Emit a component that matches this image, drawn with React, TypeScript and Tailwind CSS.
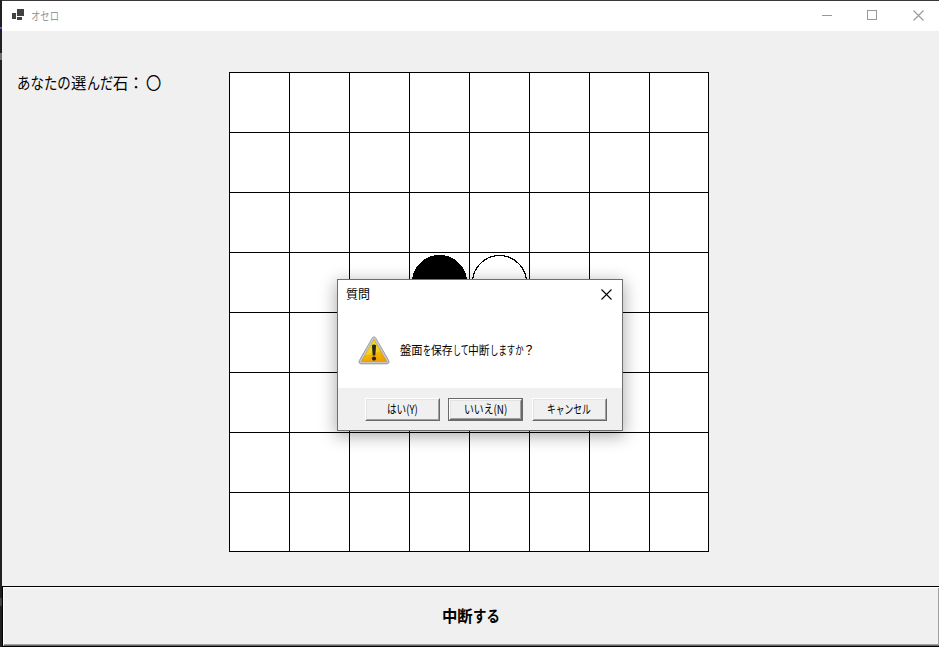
import React from "react";

type Disc = "black" | "white" | null;

const discs: Record<number, Disc> = { 27: "black", 28: "white", 35: "white", 36: "black" };

function Text({ children, width, stretch, className = "" }: { children: React.ReactNode; width: string; stretch: string; className?: string }) {
  return (
    <span className={`inline-block whitespace-pre ${width} ${className}`}>
      <span className={`inline-block origin-left ${stretch}`}>{children}</span>
    </span>
  );
}

function Cross({ className }: { className: string }) {
  return (
    <svg viewBox="0 0 11 11" className={`h-[11px] w-[11px] ${className}`} fill="none" stroke="currentColor">
      <path d="M.5.5l10 10M10.5.5l-10 10" strokeWidth="1.1" />
    </svg>
  );
}

function TitleBar() {
  return (
    <header className="flex h-[30px] items-center bg-white pl-[10px] text-[#999]">
      <svg viewBox="0 0 12 12" className="h-3 w-3 -translate-y-px" fill="#424242" shapeRendering="crispEdges">
        <path d="M5 0h7v7H5zM0 4h4v6H0zM5 8h5v3H5z" />
      </svg>
      <Text width="w-[28px]" stretch="scale-x-[0.78]" className="ml-[7px] text-[12px] leading-[30px]">オセロ</Text>
      <div className="mb-[2px] ml-auto flex items-center pr-[15px]">
        <div className="h-px w-[10px] bg-[#999]" />
        <div className="ml-[35px] h-[10px] w-[10px] border border-[#999]" />
        <Cross className="ml-[36px] text-[#999]" />
      </div>
    </header>
  );
}

function Board() {
  return (
    <div className="grid h-[480px] w-[480px] shrink-0 grid-cols-[repeat(7,60px)_58px] grid-rows-[repeat(7,60px)_58px] border border-black bg-white">
      {Array.from({ length: 64 }, (_, i) => (
        <div key={i} className={`pl-[2px] pt-[2px] ${i % 8 < 7 ? "border-r border-black" : ""} ${i < 56 ? "border-b border-black" : ""}`}>
          {discs[i] && (
            <svg viewBox="0 0 55 55" className="h-[55px] w-[55px]" shapeRendering="crispEdges">
              <circle cx="27.5" cy="27.5" r="27" fill={discs[i] as string} stroke="black" strokeWidth="1.2" />
            </svg>
          )}
        </div>
      ))}
    </div>
  );
}

function DialogButton({ children, focused = false }: { children: React.ReactNode; focused?: boolean }) {
  return (
    <button className={`block h-[23px] w-[75px] bg-[#f0f0f0] ${focused ? "border border-[#696969]" : ""}`}>
      <span className="flex h-full items-center justify-center border border-b-[#696969] border-l-white border-r-[#696969] border-t-white">
        <span className="flex h-full w-full items-center justify-center border border-b-[#a0a0a0] border-l-[#e3e3e3] border-r-[#a0a0a0] border-t-[#e3e3e3] pb-[2px] text-[12px] leading-none">
          {children}
        </span>
      </span>
    </button>
  );
}

function Warning() {
  return (
    <svg viewBox="0 0 32 29" className="h-[29px] w-8">
      <defs>
        <linearGradient id="rim" x2="0" y2="1"><stop stopColor="#a8a8a8" /><stop offset="1" stopColor="#8f9295" /></linearGradient>
        <linearGradient id="gold" x2="0.3" y2="1"><stop stopColor="#e0da00" /><stop offset=".5" stopColor="#f0ca00" /><stop offset="1" stopColor="#f2a200" /></linearGradient>
        <linearGradient id="shine" x2="1" y2="1"><stop stopColor="#fff34a" /><stop offset="1" stopColor="#ffd83b" /></linearGradient>
      </defs>
      <path d="M14.2 1.9Q16-.5 17.8 1.9L30.7 24.7Q31.8 27.7 28.7 27.8H3.3Q.2 27.7 1.3 24.7Z" fill="#c6c8c9" stroke="url(#rim)" strokeWidth="1" />
      <path d="M16 3.7L28.7 25.6H3.3Z" fill="url(#gold)" stroke="#c79608" strokeWidth=".6" />
      <path d="M16 4.5L22 15Q15 19 7 19Z" fill="url(#shine)" opacity=".45" />
      <path d="M13.9 9.2Q16 7.8 18.1 9.2L17.3 19.4H14.7Z" fill="#252522" />
      <circle cx="16" cy="22.6" r="2.1" fill="#252522" />
    </svg>
  );
}

function Dialog() {
  return (
    <section className="absolute left-[337px] top-[279px] flex h-[152px] w-[286px] flex-col border border-[#6e6e6e] bg-white shadow-[0_4px_16px_1px_rgba(0,0,0,0.33)]">
      <div className="flex h-[29px] items-center justify-between pl-2 pr-[10px]">
        <Text width="w-[26px]" stretch="scale-x-100" className="-mt-[2px] text-[12px] leading-none">質問</Text>
        <Cross className="-mt-px text-black" />
      </div>
      <div className="flex h-[79px] items-start pl-[20px] pt-[27px]">
        <Warning />
        <div className="ml-[10px] mt-[8px] flex text-[12px] leading-none">
          <Text width="w-[23px]" stretch="scale-x-[0.94]">盤面</Text>
          <Text width="w-[8px]" stretch="scale-x-[0.68]">を</Text>
          <Text width="w-[22px]" stretch="scale-x-[0.9]">保存</Text>
          <Text width="w-[15px]" stretch="scale-x-[0.66]">して</Text>
          <Text width="w-[22px]" stretch="scale-x-[0.9]">中断</Text>
          <Text width="w-[33px]" stretch="scale-x-[0.7]">しますか</Text>
          <Text width="w-[12px]" stretch="scale-x-100">？</Text>
        </div>
      </div>
      <footer className="flex flex-1 bg-[#f0f0f0] pl-[27px] pt-[10px]">
        <DialogButton><Text width="w-[31px]" stretch="scale-x-[0.8]">はい(Y)</Text></DialogButton>
        <div className="ml-2"><DialogButton focused><Text width="w-[43px]" stretch="scale-x-[0.82]">いいえ(N)</Text></DialogButton></div>
        <div className="ml-[9px]"><DialogButton><Text width="w-[45px]" stretch="scale-x-[0.73]">キャンセル</Text></DialogButton></div>
      </footer>
    </section>
  );
}

export default function App() {
  return (
    <div className="relative flex h-[647px] w-[939px] overflow-hidden bg-[#202022] pt-px font-['Noto_Sans_CJK_JP',sans-serif] text-black">
      <div className="flex w-[2px] shrink-0 flex-col">
        <div className="mt-[26px] h-[2px] bg-[#6548dc]" />
        <div className="mt-[24px] h-[7px] bg-[#776d61]" />
        <div className="mt-[538px] h-[8px] bg-[#444]" />
      </div>
      <div className="-mt-px flex min-w-0 flex-1 flex-col border-t border-[#38383a]">
        <TitleBar />
        <main className="flex h-[555px] bg-[#f0f0f0] pt-[41px]">
          <div className="-mt-px flex h-[22px] w-[227px] shrink-0 pl-[15px] text-[16px] leading-[22px]">
            <Text width="w-[54px]" stretch="scale-x-[0.84]">あなたの</Text>
            <Text width="w-[16px]" stretch="scale-x-[0.96]">選</Text>
            <Text width="w-[26px]" stretch="scale-x-[0.82]">んだ</Text>
            <Text width="w-[15px]" stretch="scale-x-[0.95]">石</Text>
            <Text width="w-[18px]" stretch="scale-x-100">：</Text>
            <Text width="w-[16px]" stretch="scale-x-[0.95]">〇</Text>
          </div>
          <Board />
        </main>
        <button className="h-[61px] border-b border-l border-t border-black bg-[#f0f0f0]">
          <span className="flex h-full items-center justify-center border-b border-l border-t border-b-[#696969] border-l-white border-t-white">
            <span className="flex h-full w-full items-center justify-center border-b border-r border-[#a0a0a0] pb-[2px] text-[16px] font-bold leading-none">
              <Text width="w-[31px]" stretch="scale-x-[0.96]">中断</Text>
              <Text width="w-[27px]" stretch="scale-x-[0.84]">する</Text>
            </span>
          </span>
        </button>
      </div>
      <Dialog />
    </div>
  );
}
